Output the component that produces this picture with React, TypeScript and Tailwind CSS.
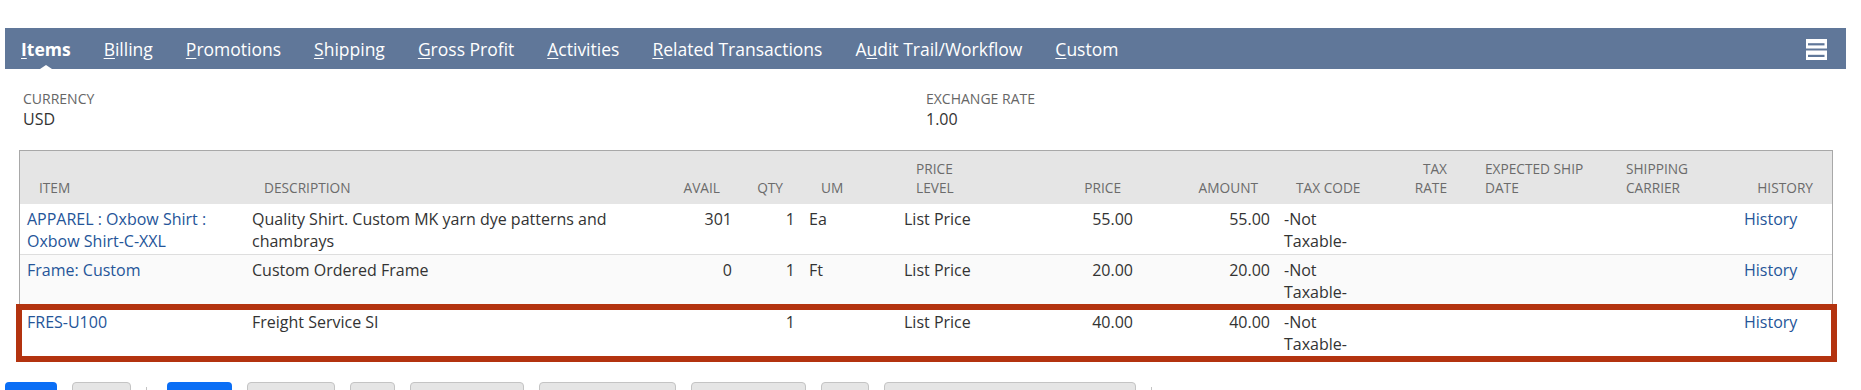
import React from 'react';

const TABS: { label: string; key: number; active?: boolean }[] = [
  { label: 'Items', key: 0, active: true },
  { label: 'Billing', key: 0 },
  { label: 'Promotions', key: 0 },
  { label: 'Shipping', key: 0 },
  { label: 'Gross Profit', key: 0 },
  { label: 'Activities', key: 0 },
  { label: 'Related Transactions', key: 0 },
  { label: 'Audit Trail/Workflow', key: 1 },
  { label: 'Custom', key: 0 },
];

const COLS =
  'grid grid-cols-[225px_435px_59px_63px_95px_110px_133px_137px_103px_86px_141px_130px_95px]';

type Row = {
  item: string[];
  desc: string[];
  avail: string;
  qty: string;
  um: string;
  level: string;
  price: string;
  amount: string;
};

const ROWS: Row[] = [
  {
    item: ['APPAREL : Oxbow Shirt :', 'Oxbow Shirt-C-XXL'],
    desc: ['Quality Shirt. Custom MK yarn dye patterns and', 'chambrays'],
    avail: '301',
    qty: '1',
    um: 'Ea',
    level: 'List Price',
    price: '55.00',
    amount: '55.00',
  },
  {
    item: ['Frame: Custom'],
    desc: ['Custom Ordered Frame'],
    avail: '0',
    qty: '1',
    um: 'Ft',
    level: 'List Price',
    price: '20.00',
    amount: '20.00',
  },
  {
    item: ['FRES-U100'],
    desc: ['Freight Service SI'],
    avail: '',
    qty: '1',
    um: '',
    level: 'List Price',
    price: '40.00',
    amount: '40.00',
  },
];

function Lines({ lines }: { lines: string[] }) {
  return (
    <>
      {lines.map((l, i) => (
        <div key={i} className="whitespace-nowrap">
          {l}
        </div>
      ))}
    </>
  );
}

function TabLabel({ label, k }: { label: string; k: number }) {
  return (
    <>
      {label.slice(0, k)}
      <span className="underline underline-offset-2">{label[k]}</span>
      {label.slice(k + 1)}
    </>
  );
}

function ListIcon() {
  return (
    <svg width="21" height="21" viewBox="0 0 21 21">
      <rect x="0" y="0" width="21" height="9.5" fill="#fff" />
      <rect x="2" y="4.2" width="16.5" height="2.2" fill="#607799" />
      <rect x="0" y="11.5" width="21" height="9.5" fill="#fff" />
      <rect x="2" y="15.8" width="16.5" height="2.2" fill="#607799" />
    </svg>
  );
}

function Header() {
  const h = 'flex flex-col justify-end pb-[7px] text-[13.7px] leading-[19px] text-[#6b6b6b] whitespace-nowrap';
  const l = `${h} pl-[19px] pr-[2px]`;
  const r = `${h} items-end pl-[2px] pr-[19px]`;
  return (
    <div className={`${COLS} h-[53px] bg-[#e5e5e5]`}>
      <div className={l}>ITEM</div>
      <div className={l}>DESCRIPTION</div>
      <div className={r}>AVAIL</div>
      <div className={r}>QTY</div>
      <div className={l}>UM</div>
      <div className={l}>
        <div>PRICE</div>
        <div>LEVEL</div>
      </div>
      <div className={r}>PRICE</div>
      <div className={r}>AMOUNT</div>
      <div className={l}>TAX CODE</div>
      <div className={r}>
        <div>TAX</div>
        <div>RATE</div>
      </div>
      <div className={l}>
        <div>EXPECTED SHIP</div>
        <div>DATE</div>
      </div>
      <div className={l}>
        <div>SHIPPING</div>
        <div>CARRIER</div>
      </div>
      <div className={r}>HISTORY</div>
    </div>
  );
}

function ItemRow({ row, className }: { row: Row; className: string }) {
  const c = 'px-[7px] text-[16px] leading-[22px] whitespace-nowrap';
  const link = 'text-[#255599]';
  return (
    <div className={`${COLS} ${className}`}>
      <div className={`${c} ${link}`}>
        <Lines lines={row.item} />
      </div>
      <div className={c}>
        <Lines lines={row.desc} />
      </div>
      <div className={`${c} text-right`}>{row.avail}</div>
      <div className={`${c} text-right`}>{row.qty}</div>
      <div className={c}>{row.um}</div>
      <div className={c}>{row.level}</div>
      <div className={`${c} text-right`}>{row.price}</div>
      <div className={`${c} text-right`}>{row.amount}</div>
      <div className={c}>
        <div>-Not</div>
        <div>Taxable-</div>
      </div>
      <div className={c} />
      <div className={c} />
      <div className={c} />
      <div className={`${c} ${link}`}>History</div>
    </div>
  );
}

export default function App() {
  return (
    <div className="w-[1861px] h-[390px] overflow-hidden bg-white font-['Open_Sans',sans-serif] text-[#333]">
      {/* subtab bar */}
      <div className="pt-[28px] pl-[5px]">
        <div className="flex h-[41px] w-[1841px] items-center bg-[#607799] pl-[16px] pr-[19px] pt-[1px] text-[17.5px] text-white">
          <div className="flex gap-[33px]">
            {TABS.map((t) => (
              <div key={t.label} className={`relative whitespace-nowrap ${t.active ? 'font-bold' : ''}`}>
                <TabLabel label={t.label} k={t.key} />
                {t.active && (
                  <span className="absolute bottom-[-9px] left-1/2 h-0 w-0 -translate-x-1/2 border-x-[9px] border-b-[6px] border-x-transparent border-b-white" />
                )}
              </div>
            ))}
          </div>
          <div className="ml-auto flex">
            <ListIcon />
          </div>
        </div>
      </div>

      {/* currency fields */}
      <div className="flex pl-[23px] pt-[20px]">
        <div className="w-[903px]">
          <div className="text-[14px] leading-[19px] text-[#666]">CURRENCY</div>
          <div className="text-[16px] leading-[22px]">USD</div>
        </div>
        <div>
          <div className="text-[14px] leading-[19px] text-[#666]">EXCHANGE RATE</div>
          <div className="text-[16px] leading-[22px]">1.00</div>
        </div>
      </div>

      {/* item sublist */}
      <div className="relative ml-[19px] mt-[20px] w-[1814px] border-x border-t border-[#a8a8a8]">
        <Header />
        <ItemRow row={ROWS[0]} className="h-[51px] border-b border-[#dedede] bg-white pt-[4px]" />
        <ItemRow row={ROWS[1]} className="h-[49px] bg-[#fafafa] pt-[4px]" />
        <div className="relative">
          <ItemRow row={ROWS[2]} className="h-[58px] bg-white pt-[7px]" />
          <div className="pointer-events-none absolute inset-y-0 -left-[4px] -right-[5px] border-[6px] border-[#b3330f]" />
        </div>
      </div>

      {/* buttons */}
      <div className="mt-[20px] flex items-start gap-[15px] pl-[5px]">
        <div className="h-[28px] w-[52px] rounded-[4px] bg-[#0a6ef5]" />
        <div className="h-[28px] w-[59px] rounded-[4px] border border-[#c4c4c4] bg-[#e5e5e5]" />
        <div className="mt-[5px] h-[20px] w-px bg-[#c4c4c4]" />
        <div className="ml-[5px] h-[28px] w-[65px] rounded-[4px] bg-[#0a6ef5]" />
        <div className="h-[28px] w-[88px] rounded-[4px] border border-[#c4c4c4] bg-[#e5e5e5]" />
        <div className="h-[28px] w-[45px] rounded-[4px] border border-[#c4c4c4] bg-[#e5e5e5]" />
        <div className="h-[28px] w-[114px] rounded-[4px] border border-[#c4c4c4] bg-[#e5e5e5]" />
        <div className="h-[28px] w-[137px] rounded-[4px] border border-[#c4c4c4] bg-[#e5e5e5]" />
        <div className="h-[28px] w-[115px] rounded-[4px] border border-[#c4c4c4] bg-[#e5e5e5]" />
        <div className="h-[28px] w-[48px] rounded-[4px] border border-[#c4c4c4] bg-[#e5e5e5]" />
        <div className="h-[28px] w-[252px] rounded-[4px] border border-[#c4c4c4] bg-[#e5e5e5]" />
        <div className="mt-[5px] h-[20px] w-px bg-[#c4c4c4]" />
      </div>
    </div>
  );
}
